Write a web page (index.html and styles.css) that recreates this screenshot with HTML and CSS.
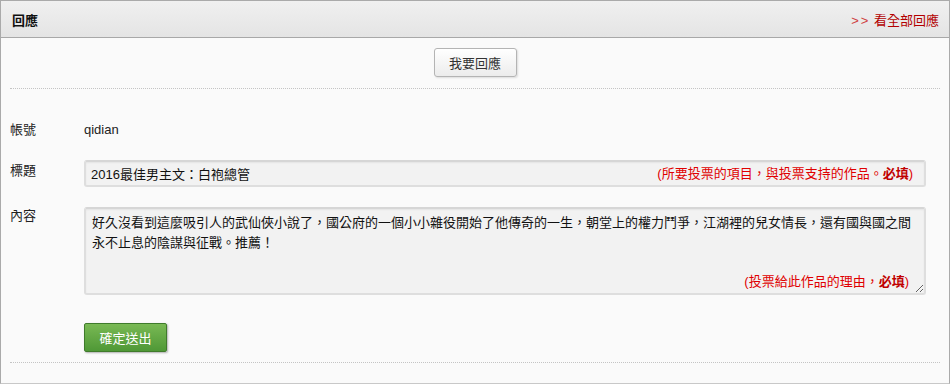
FILE: index.html
```html
<!DOCTYPE html>
<html lang="zh-Hant">
<head>
    <meta charset="UTF-8">
    <title>回應</title>
    <link rel="stylesheet" href="styles.css">
</head>
<body>
    <div class="reply-box">
        <!-- Header -->
        <div class="reply-head">
            <h2 class="reply-title">回應</h2>
            <a href="#" class="more-link"><span class="arrows">&gt;&gt;</span> 看全部回應</a>
        </div>

        <div class="reply-body">
            <div class="reply-action">
                <button type="button" class="plain-btn">我要回應</button>
            </div>

            <form class="reply-form">
                <div class="form-label">帳號</div>
                <div class="form-value">qidian</div>

                <div class="form-label label-field">標題</div>
                <div class="field-wrap">
                    <input type="text" class="text-input" value="2016最佳男主文：白袍總管">
                    <span class="field-hint">(所要投票的項目，與投票支持的作品。<b>必填</b>)</span>
                </div>

                <div class="form-label label-area">內容</div>
                <div class="field-wrap">
                    <textarea class="text-area">好久沒看到這麼吸引人的武仙俠小說了，國公府的一個小小雜役開始了他傳奇的一生，朝堂上的權力鬥爭，江湖裡的兒女情長，還有國與國之間永不止息的陰謀與征戰。推薦！</textarea>
                    <span class="field-hint hint-area">(投票給此作品的理由，<b>必填</b>)</span>
                </div>

                <div></div>
                <div class="submit-row">
                    <button type="submit" class="green-btn">確定送出</button>
                </div>
            </form>
        </div>
    </div>
</body>
</html>
```

FILE: styles.css
```css
* {
    margin: 0;
    padding: 0;
    box-sizing: border-box;
}

html, body {
    width: 100%;
    height: 100%;
    overflow: hidden;
    background: #fff;
}

body {
    font-family: "Liberation Sans", "Noto Sans CJK TC", sans-serif;
    font-size: 13px;
    color: #222;
}

/* Box */
.reply-box {
    width: 950px;
    height: 384px;
    border: 1px solid #aaa;
    border-bottom-color: #c8c8c8;
    background: #fafafa;
}

/* Header */
.reply-head {
    height: 37px;
    display: flex;
    align-items: center;
    justify-content: space-between;
    padding: 0 10px 0 11px;
    background: linear-gradient(#f0f0f0, #e4e4e4);
    border-bottom: 1px solid #a8a8a8;
}

.reply-title {
    font-size: 13px;
    font-weight: bold;
    color: #111;
}

.more-link {
    color: #b30000;
    text-decoration: none;
    font-size: 13px;
}

.more-link .arrows {
    color: #d04040;
    letter-spacing: 2px;
}

/* Body */
.reply-body {
    padding: 10px 9px 0 9px;
}

.reply-action {
    display: flex;
    justify-content: center;
    padding-bottom: 11px;
    border-bottom: 1px dotted #c4c4c4;
}

.plain-btn {
    width: 83px;
    height: 29px;
    font-family: inherit;
    font-size: 13px;
    color: #333;
    background: linear-gradient(#ffffff, #ececec);
    border: 1px solid #b4b4b4;
    border-radius: 3px;
    box-shadow: 1px 1px 2px rgba(0, 0, 0, 0.12);
    cursor: pointer;
}

/* Form */
.reply-form {
    display: grid;
    grid-template-columns: 74px 842px;
    row-gap: 20px;
    padding: 31px 0 10px 0;
    border-bottom: 1px dotted #c4c4c4;
}

.form-label,
.form-value {
    line-height: 20px;
    color: #222;
}

.label-field {
    padding-top: 1px;
}

.label-area {
    padding-top: 0;
    line-height: 18px;
}

.field-wrap {
    position: relative;
}

.text-input,
.text-area {
    display: block;
    width: 100%;
    font-family: inherit;
    font-size: 13px;
    color: #111;
    background: #f2f2f2;
    border: 2px solid #dedede;
    border-top-color: #d6d6d6;
    border-radius: 3px;
    box-shadow: inset 0 1px 2px rgba(0, 0, 0, 0.06);
    outline: none;
}

.text-input {
    height: 27px;
    padding: 0 5px;
}

.text-area {
    height: 88px;
    padding: 4px 6px;
    line-height: 20px;
    resize: vertical;
}

.field-hint {
    position: absolute;
    right: 13px;
    top: 5px;
    line-height: 18px;
    color: #e00000;
    pointer-events: none;
}

.field-hint b {
    color: #c00000;
}

.hint-area {
    top: auto;
    right: 17px;
    bottom: 4px;
}

.submit-row {
    margin-top: 8px;
}

.green-btn {
    width: 83px;
    height: 29px;
    font-family: inherit;
    font-size: 13px;
    color: #fff;
    background: linear-gradient(#79b954, #4f9836);
    border: 1px solid #3f7b2b;
    border-radius: 2px;
    box-shadow: 1px 1px 2px rgba(0, 0, 0, 0.3);
    cursor: pointer;
}
```
